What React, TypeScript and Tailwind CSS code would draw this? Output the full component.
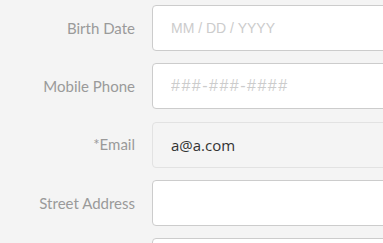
const rows = [
  { label: "Birth Date", placeholder: "MM / DD / YYYY", value: "" },
  { label: "Mobile Phone", placeholder: "###-###-####", value: "", phone: true },
  { label: "*Email", placeholder: "", value: "a@a.com", disabled: true },
  { label: "Street Address", placeholder: "", value: "" },
  { label: "", placeholder: "", value: "" }
];

export default function App() {
  return (
    <div className="h-[243px] w-[383px] overflow-hidden bg-[#f4f4f4] pt-[5px]">
      <div className="flex flex-col gap-[12.25px]">
        {rows.map((r, i) => (
          <div key={i} className="flex items-center gap-[17px]">
            <label className="w-[135px] shrink-0 text-right font-['Lato',sans-serif] text-[15px] text-[#9a9a9a]">
              {r.label}
            </label>
            <input
              type="text"
              readOnly
              placeholder={r.placeholder}
              defaultValue={r.value}
              className={
                r.disabled
                  ? "h-[46px] w-[260px] shrink-0 rounded-[4px] border border-[#e2e2e2] bg-[#f4f4f4] px-[18px] font-['Open_Sans',sans-serif] text-[15px] text-[#333] outline-none"
                  : r.phone
                    ? "h-[46px] w-[260px] shrink-0 rounded-[4px] border border-[#cccccc] bg-white px-[18px] font-['Liberation_Sans',sans-serif] text-[16px] tracking-[1.5px] text-[#333] outline-none placeholder:text-[#cccccc]"
                    : "h-[46px] w-[260px] shrink-0 rounded-[4px] border border-[#cccccc] bg-white px-[18px] font-['Liberation_Sans',sans-serif] text-[14px] text-[#333] outline-none placeholder:text-[#cccccc]"
              }
            />
          </div>
        ))}
      </div>
    </div>
  );
}
